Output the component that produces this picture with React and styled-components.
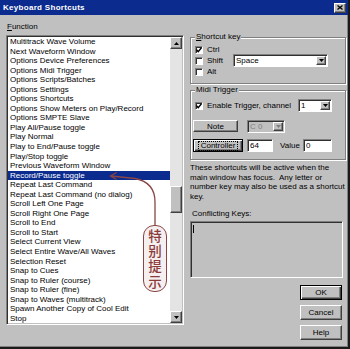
import React from "react";
import styled, { createGlobalStyle, css } from "styled-components";

const GlobalStyle = createGlobalStyle`
    html, body {
        margin: 0;
        padding: 0;
        background: #c0c0c0;
    }
    body {
        font-family: "Liberation Sans", Arial, sans-serif;
    }
`;

const raised = css`
    border: 1px solid;
    border-color: #ffffff #404040 #404040 #ffffff;
    box-shadow: inset -1px -1px #808080;
    background: #c0c0c0;
`;

const sunken = css`
    border: 1px solid;
    border-color: #808080 #ffffff #ffffff #808080;
    box-shadow: inset 1px 1px #303030;
`;

const Window = styled.div`
    position: relative;
    width: 350px;
    height: 349px;
    box-sizing: border-box;
    background: #c0c0c0;
    border-right: 2px solid #1a1a1a;
    border-bottom: 2px solid #1a1a1a;
    box-shadow: inset -1px -1px #808080;
    display: flex;
    flex-direction: column;
    overflow: hidden;
    font-family: "Liberation Sans", Arial, sans-serif;
    font-size: 8px;
    color: #000;
`;

const TitleBar = styled.div`
    height: 15px;
    flex: none;
    display: flex;
    align-items: center;
    justify-content: space-between;
    padding: 0 2px 0 3px;
    background: #0b2b8e;
`;

const Title = styled.span`
    color: #ffffff;
    font-weight: 700;
    font-size: 8px;
    letter-spacing: 0.3px;
`;

const CloseButton = styled.div`
    ${raised};
    width: 12px;
    height: 10px;
    box-sizing: border-box;
    display: flex;
    align-items: center;
    justify-content: center;
`;

const Body = styled.div`
    flex: 1;
    display: flex;
    gap: 6px;
    padding: 6px 0 0 6px;
`;

const LeftColumn = styled.div`
    width: 178px;
    display: flex;
    flex-direction: column;
`;

const FieldLabel = styled.div`
    height: 11px;
    line-height: 11px;
    padding-left: 1px;
    margin-bottom: 3px;
`;

const ListBox = styled.div`
    ${sunken};
    height: 290px;
    box-sizing: border-box;
    padding: 1px;
    display: flex;
`;

const Items = styled.div`
    flex: 1;
    background: #ffffff;
    overflow: hidden;
`;

const Item = styled.div`
    height: 9.55px;
    line-height: 9.55px;
    padding-left: 2px;
    white-space: nowrap;
    ${(p) => p.$selected && css`
        background: #0b2b8e;
        color: #ffffff;
    `}
`;

const ScrollBar = styled.div`
    width: 12px;
    display: flex;
    flex-direction: column;
    background: #e4e4e4;
`;

const ScrollArrow = styled.div`
    ${raised};
    height: 12px;
    box-sizing: border-box;
    display: flex;
    align-items: center;
    justify-content: center;
`;

const Track = styled.div`
    flex: 1;
`;

const Thumb = styled.div`
    ${raised};
    height: 27px;
    box-sizing: border-box;
`;

const RightColumn = styled.div`
    width: 156px;
    display: flex;
    flex-direction: column;
`;

const GroupBox = styled.fieldset`
    margin: ${(p) => p.$top}px 0 0 0;
    padding: ${(p) => p.$padTop}px 0 ${(p) => p.$padBottom}px 2px;
    border: 1px solid #808080;
    box-shadow: inset 1px 1px #ffffff, 1px 1px #ffffff;
    min-width: 0;
`;

const Legend = styled.legend`
    margin-left: 2px;
    padding: 0 1px;
    line-height: 10px;
    font-size: 8px;
    background: #c0c0c0;
`;

const Accel = styled.span`
    text-decoration: underline;
`;

const ShortcutRow = styled.div`
    display: flex;
    align-items: center;
`;

const CheckColumn = styled.div`
    width: 40px;
    display: flex;
    flex-direction: column;
`;

const CheckRow = styled.label`
    height: ${(p) => p.$h || 11}px;
    margin-left: 2px;
    display: flex;
    align-items: center;
    gap: 4px;
    white-space: nowrap;
`;

const CheckBox = styled.span`
    ${sunken};
    width: 8px;
    height: 8px;
    box-sizing: border-box;
    background: #ffffff;
    display: flex;
    align-items: center;
    justify-content: center;
`;

const MidiRow = styled.div`
    display: flex;
    align-items: center;
    height: ${(p) => p.$h}px;
    margin-top: ${(p) => p.$mt || 0}px;
    padding-right: ${(p) => p.$pr || 0}px;
    justify-content: ${(p) => (p.$spread ? "space-between" : "flex-start")};
`;

const Combo = styled.div`
    ${sunken};
    width: ${(p) => p.$w}px;
    height: 13px;
    box-sizing: border-box;
    display: flex;
    align-items: stretch;
    background: ${(p) => (p.$disabled ? "#c0c0c0" : "#ffffff")};
    color: ${(p) => (p.$disabled ? "#808080" : "#000")};
    margin-left: ${(p) => p.$ml || 0}px;
`;

const ComboText = styled.span`
    flex: 1;
    padding-left: 2px;
    line-height: 11px;
`;

const ComboArrow = styled.span`
    ${raised};
    width: 10px;
    box-sizing: border-box;
    margin: 1px 1px 1px 0;
    display: flex;
    align-items: center;
    justify-content: center;
`;

const Button = styled.div`
    ${raised};
    width: ${(p) => p.$w}px;
    height: ${(p) => p.$h || 12}px;
    box-sizing: border-box;
    display: flex;
    align-items: center;
    justify-content: center;
    ${(p) => p.$default && css`
        border: 1px solid #000;
        box-shadow: inset 1px 1px #ffffff, inset -1px -1px #404040, inset -2px -2px #808080;
    `}
`;

const FocusText = styled.span`
    padding: 0 2px;
    outline: 1px dotted #000;
    line-height: 8px;
`;

const TextInput = styled.div`
    ${sunken};
    width: ${(p) => p.$w}px;
    height: 13px;
    box-sizing: border-box;
    background: #ffffff;
    padding-left: 2px;
    line-height: 11px;
    margin-left: ${(p) => p.$ml || 0}px;
`;

const InlineLabel = styled.span`
    margin-left: ${(p) => p.$ml}px;
`;

const HelpText = styled.div`
    margin-top: 3px;
    line-height: 9.7px;
    white-space: nowrap;
`;

const ConflictLabel = styled.div`
    margin: 7px 0 0 2px;
    line-height: 10px;
`;

const ConflictBox = styled.div`
    ${sunken};
    margin-top: 2px;
    width: 153px;
    height: 57px;
    box-sizing: border-box;
    padding: 3px 0 0 2px;
`;

const Caret = styled.div`
    width: 1px;
    height: 8px;
    background: #000;
`;

const ButtonColumn = styled.div`
    margin: 7px 4px 0 0;
    align-self: flex-end;
    display: flex;
    flex-direction: column;
    gap: 5px;
`;

const Overlay = styled.svg`
    position: absolute;
    left: 0;
    top: 0;
    pointer-events: none;
`;

const NoteTag = styled.div`
    position: absolute;
    left: 143px;
    top: 225px;
    width: 24px;
    height: 67px;
    box-sizing: border-box;
    border: 1.5px solid #8a4545;
    border-radius: 11px;
    background: #f5efef;
    display: flex;
    justify-content: center;
    padding-top: 3px;
`;

const NoteText = styled.span`
    writing-mode: vertical-rl;
    font-family: "Noto Sans CJK SC", sans-serif;
    font-size: 13.5px;
    font-weight: 500;
    letter-spacing: 1.8px;
    line-height: 18px;
    color: #8b3a3a;
`;

const functions = [
    "Multitrack Wave Volume",
    "Next Waveform Window",
    "Options Device Preferences",
    "Options Midi Trigger",
    "Options Scripts/Batches",
    "Options Settings",
    "Options Shortcuts",
    "Options Show Meters on Play/Record",
    "Options SMPTE Slave",
    "Play All/Pause toggle",
    "Play Normal",
    "Play to End/Pause toggle",
    "Play/Stop toggle",
    "Previous Waveform Window",
    "Record/Pause toggle",
    "Repeat Last Command",
    "Repeat Last Command (no dialog)",
    "Scroll Left One Page",
    "Scroll Right One Page",
    "Scroll to End",
    "Scroll to Start",
    "Select Current View",
    "Select Entire Wave/All Waves",
    "Selection Reset",
    "Snap to Cues",
    "Snap to Ruler (course)",
    "Snap to Ruler (fine)",
    "Snap to Waves (multitrack)",
    "Spawn Another Copy of Cool Edit",
    "Stop",
];

const SELECTED = 14;

function Triangle({ up, color = "#000" }) {
    return (
        <svg width="5" height="3" viewBox="0 0 5 3">
            <path d={up ? "M0 3 L2.5 0 L5 3 Z" : "M0 0 L5 0 L2.5 3 Z"} fill={color} />
        </svg>
    );
}

function Check({ checked }) {
    return (
        <CheckBox>
            {checked && (
                <svg width="6" height="6" viewBox="0 0 6 6">
                    <polyline points="0.5,2.8 2.2,4.6 5.5,0.8" fill="none" stroke="#000" strokeWidth="1.4" />
                </svg>
            )}
        </CheckBox>
    );
}

function Dropdown({ width, value, disabled, ml }) {
    return (
        <Combo $w={width} $disabled={disabled} $ml={ml}>
            <ComboText>{value}</ComboText>
            <ComboArrow>
                <Triangle color={disabled ? "#808080" : "#000"} />
            </ComboArrow>
        </Combo>
    );
}

export default function App() {
    const trackHeight = 262;
    const thumbTop = Math.round((trackHeight - 27) * 0.583);

    return (
        <>
            <GlobalStyle />
            <Window>
                <TitleBar>
                    <Title>Keyboard Shortcuts</Title>
                    <CloseButton>
                        <svg width="6" height="5" viewBox="0 0 6 5">
                            <path d="M0.5 0.5 L5.5 4.5 M5.5 0.5 L0.5 4.5" stroke="#000" strokeWidth="1.3" />
                        </svg>
                    </CloseButton>
                </TitleBar>
                <Body>
                    <LeftColumn>
                        <FieldLabel><Accel>F</Accel>unction</FieldLabel>
                        <ListBox>
                            <Items>
                                {functions.map((name, i) => (
                                    <Item key={name} $selected={i === SELECTED}>{name}</Item>
                                ))}
                            </Items>
                            <ScrollBar>
                                <ScrollArrow><Triangle up /></ScrollArrow>
                                <Track>
                                    <Thumb style={{ marginTop: thumbTop }} />
                                </Track>
                                <ScrollArrow><Triangle /></ScrollArrow>
                            </ScrollBar>
                        </ListBox>
                    </LeftColumn>
                    <RightColumn>
                        <GroupBox $top={11} $padTop={2} $padBottom={6}>
                            <Legend><Accel>S</Accel>hortcut key</Legend>
                            <ShortcutRow>
                                <CheckColumn>
                                    <CheckRow><Check checked />Ctrl</CheckRow>
                                    <CheckRow><Check />Shift</CheckRow>
                                    <CheckRow><Check />Alt</CheckRow>
                                </CheckColumn>
                                <Dropdown width={95} value="Space" />
                            </ShortcutRow>
                        </GroupBox>
                        <GroupBox $top={1} $padTop={4} $padBottom={7}>
                            <Legend>Midi Trigger</Legend>
                            <MidiRow $h={13} $pr={13} $spread>
                                <CheckRow $h={13}><Check checked />Enable Trigger, channel</CheckRow>
                                <Dropdown width={34} value="1" />
                            </MidiRow>
                            <MidiRow $h={12} $mt={8}>
                                <Button $w={45}>Note</Button>
                                <Dropdown width={38} value="C 0" disabled ml={9} />
                            </MidiRow>
                            <MidiRow $h={13} $mt={7}>
                                <Button $w={50} $h={13} $default>
                                    <FocusText>Controller</FocusText>
                                </Button>
                                <TextInput $w={26} $ml={4}>64</TextInput>
                                <InlineLabel $ml={7}>Value</InlineLabel>
                                <TextInput $w={29} $ml={3}>0</TextInput>
                            </MidiRow>
                        </GroupBox>
                        <HelpText>
                            These shortcuts will be active when the<br />
                            main window has focus.&nbsp; Any letter or<br />
                            number key may also be used as a shortcut<br />
                            key.
                        </HelpText>
                        <ConflictLabel>Conflicting Keys:</ConflictLabel>
                        <ConflictBox>
                            <Caret />
                        </ConflictBox>
                        <ButtonColumn>
                            <Button $w={42} $h={15} $default>OK</Button>
                            <Button $w={42} $h={15}>Cancel</Button>
                            <Button $w={42} $h={15}>Help</Button>
                        </ButtonColumn>
                    </RightColumn>
                </Body>
                <Overlay width="350" height="349" viewBox="0 0 350 349">
                    <path
                        d="M155 226 L155 202 C155 189 148 181 135 178.5 L111 176"
                        fill="none"
                        stroke="#8a4545"
                        strokeWidth="1.3"
                    />
                    <path d="M116.5 172.5 L110.5 176 L116.5 179.5" fill="none" stroke="#8a4545" strokeWidth="1.3" />
                </Overlay>
                <NoteTag>
                    <NoteText>特别提示</NoteText>
                </NoteTag>
            </Window>
        </>
    );
}
